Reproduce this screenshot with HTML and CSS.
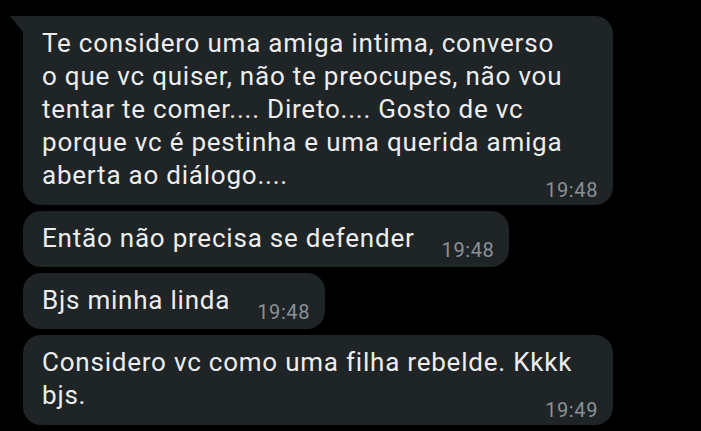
FILE: index.html
```html
<!DOCTYPE html>
<html lang="pt-BR">

<head>
    <meta charset="UTF-8">
    <meta name="viewport" content="width=device-width, initial-scale=1.0">
    <title>Conversa</title>
    <link rel="stylesheet" href="styles.css">
</head>

<body>
    <main class="chat">
        <div class="msg msg--first msg--long">
            <p class="msg__text">Te considero uma amiga intima, converso o que vc quiser, não te preocupes, não vou tentar te comer.... Direto.... Gosto de vc porque vc é pestinha e uma querida amiga aberta ao diálogo....</p>
            <span class="msg__time">19:48</span>
        </div>
        <div class="msg">
            <p class="msg__text">Então não precisa se defender</p>
            <span class="msg__time">19:48</span>
        </div>
        <div class="msg">
            <p class="msg__text">Bjs minha linda</p>
            <span class="msg__time">19:48</span>
        </div>
        <div class="msg msg--long">
            <p class="msg__text">Considero vc como uma filha rebelde. Kkkk bjs.</p>
            <span class="msg__time">19:49</span>
        </div>
    </main>
</body>

</html>
```

FILE: styles.css
```css
body {
    margin: 0;
    background-color: #000;
    font-family: Roboto, "Noto Sans", sans-serif;
}

.chat {
    display: flex;
    flex-direction: column;
    align-items: flex-start;
    gap: 6px;
    padding: 16px 0 0 23px;
}

.msg {
    position: relative;
    display: flex;
    align-items: flex-end;
    max-width: 590px;
    box-sizing: border-box;
    padding: 11px 15px 7px 19px;
    border-radius: 18px;
    background-color: #1f2427;
}

.msg--first {
    border-top-left-radius: 0;
}

/* rabinho do primeiro balão */
.msg--first::before {
    content: "";
    position: absolute;
    top: 0;
    left: -13px;
    border-top: 16px solid #1f2427;
    border-left: 13px solid transparent;
}

.msg--long {
    display: block;
    width: 590px;
    padding-bottom: 5px;
}

.msg__text {
    max-width: 534px;
    margin: 0 0 5px;
    font-size: 26px;
    line-height: 33px;
    letter-spacing: 0.78px;
    color: #ededed;
}

.msg--long .msg__text {
    margin-bottom: 0;
}

.msg__time {
    flex-shrink: 0;
    margin-left: 27px;
    font-size: 20px;
    line-height: 20px;
    letter-spacing: 0.6px;
    color: #8c9194;
}

.msg--long .msg__time {
    display: block;
    margin-top: -12px;
    text-align: right;
}
```
